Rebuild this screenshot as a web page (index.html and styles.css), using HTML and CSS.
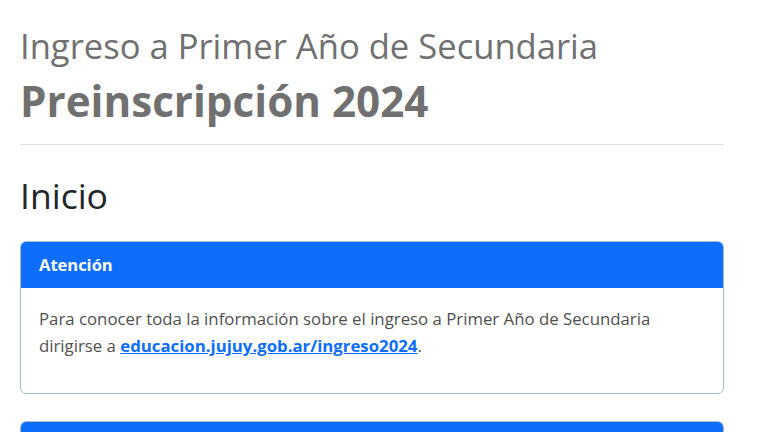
FILE: index.html
```html
<!DOCTYPE html>
<html lang="es">
<head>
    <meta charset="UTF-8">
    <meta name="viewport" content="width=device-width, initial-scale=1.0">
    <title>Preinscripción 2024</title>
    <link rel="stylesheet" href="styles.css">
</head>
<body>
    <main class="container">
        <header class="page-header">
            <h2 class="subtitle">Ingreso a Primer Año de Secundaria</h2>
            <h1 class="title">Preinscripción 2024</h1>
        </header>

        <h2 class="section-title">Inicio</h2>

        <div class="card">
            <div class="card-header">Atención</div>
            <div class="card-body">
                <p>Para conocer toda la información sobre el ingreso a Primer Año de Secundaria
                <br>dirigirse a <a href="#">educacion.jujuy.gob.ar/ingreso2024</a>.</p>
            </div>
        </div>

        <div class="card">
            <div class="card-header">&nbsp;</div>
            <div class="card-body">
                <p>&nbsp;</p>
            </div>
        </div>
    </main>
</body>
</html>
```

FILE: styles.css
```css
body {
    font-family: "Open Sans", "Noto Sans", sans-serif;
    margin: 0;
    padding: 0;
    background-color: #fff;
    color: #212529;
}
.container {
    width: 704px;
    margin: 0 0 0 20px;
    padding-top: 22px;
}
.page-header {
    border-bottom: 1px solid #dee2e6;
    padding-bottom: 13px;
}
.subtitle {
    margin: 0;
    font-size: 34.6px;
    font-weight: 400;
    line-height: 48px;
    color: #707070;
}
.title {
    margin: 0;
    font-size: 42.2px;
    font-weight: 700;
    line-height: 61px;
    color: #707070;
}
.section-title {
    margin: 25px 0 21px;
    font-size: 35.5px;
    font-weight: 400;
    line-height: 50px;
}
.card {
    border: 1px solid #a9c1cd;
    border-radius: 6px;
    overflow: hidden;
    margin-bottom: 27px;
}
.card-header {
    background-color: #0d6efd;
    color: white;
    font-weight: 700;
    font-size: 16.5px;
    padding: 0 18px;
    line-height: 46px;
}
.card-body {
    padding: 17px 18px 34px;
    font-size: 16.8px;
    line-height: 27px;
    color: #505050;
}
.card-body p {
    margin: 0;
}
.card-body a {
    color: #0d6efd;
    font-weight: 700;
}
```
